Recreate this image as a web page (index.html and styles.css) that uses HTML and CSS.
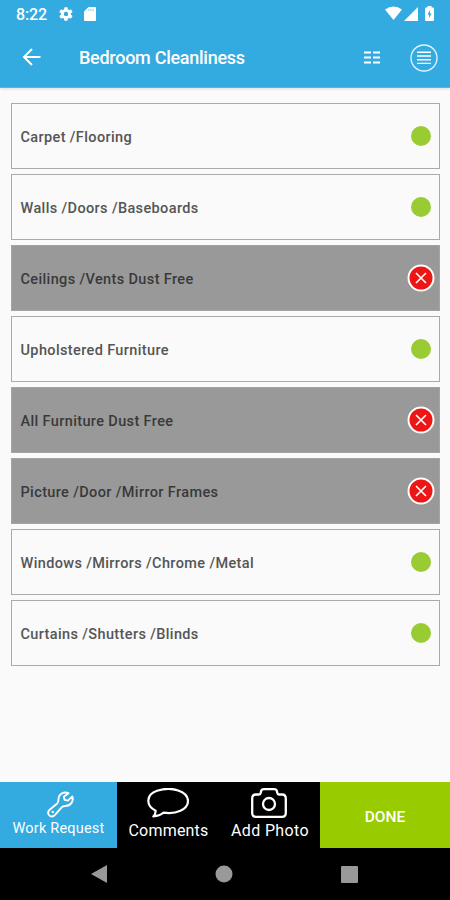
FILE: index.html
```html
<!DOCTYPE html>
<html lang="en">
<head>
<meta charset="utf-8">
<title>Bedroom Cleanliness</title>
<link rel="stylesheet" href="styles.css">
</head>
<body>
<div class="screen">
  <header class="header">
    <div class="status">
      <span class="time">8:22</span>
      <svg class="gear" width="16" height="16" viewBox="0 0 24 24"><path fill="#fff" fill-rule="evenodd" d="M19.4 13a7.500 7.500 0 0 0 0-2l2.100-1.600a.5.5 0 0 0 .1-.7l-2-3.400a.5.5 0 0 0-.6-.2l-2.500 1a7 7 0 0 0-1.700-1l-.4-2.600a.5.5 0 0 0-.5-.5h-4a.5.5 0 0 0-.5.5L9 5.100a7 7 0 0 0-1.700 1l-2.500-1a.5.5 0 0 0-.6.200l-2 3.400a.5.5 0 0 0 .1.700L4.500 11a7.500 7.500 0 0 0 0 2l-2.200 1.600a.5.5 0 0 0-.1.700l2 3.400c.1.200.4.300.6.200l2.500-1a7 7 0 0 0 1.700 1l.4 2.600c0 .3.200.5.500.5h4c.3 0 .5-.2.500-.5l.4-2.600a7 7 0 0 0 1.700-1l2.500 1c.2.100.5 0 .6-.2l2-3.400a.5.5 0 0 0-.1-.7zM12 15.300a3.300 3.300 0 1 1 0-6.600 3.300 3.300 0 0 1 0 6.600z"/></svg>
      <svg class="card" width="12" height="14" viewBox="0 0 12 14"><path fill="#fff" d="M4.500 0H11q1 0 1 1v12q0 1-1 1H1q-1 0-1-1V4.500z"/><path stroke="#33aae0" stroke-opacity=".55" d="M4.800 2v2M7 2v2M9.200 2v2"/></svg>
      <svg class="signals" width="50" height="16" viewBox="0 0 50 16"><g fill="#fff"><path d="M0 3.500Q8.500-2.500 17 3.500L8.500 14z"/><path d="M33 1v14H19z"/><path d="M42.500 0h4v1.500H48q1 0 1 1V14q0 1-1 1h-7q-1 0-1-1V2.500q0-1 1-1h1.500z"/></g><path fill="#33aae0" d="M45 4l-2.500 4.500H44V12l2.600-4.500H45z"/></svg>
    </div>
    <div class="toolbar">
      <svg class="back" width="20" height="18" viewBox="0 0 20 18"><path fill="none" stroke="#fff" stroke-width="2" d="M18.500 9H2M10 1L2 9l8 8"/></svg>
      <h1 class="title">Bedroom Cleanliness</h1>
      <svg class="columns" width="16" height="13" viewBox="0 0 16 13"><path stroke="#fff" stroke-width="1.800" d="M0 1.500h7M9 1.500h7M0 6.500h7M9 6.500h7M0 11.500h7M9 11.500h7"/></svg>
      <svg class="menu" width="28" height="28" viewBox="0 0 28 28"><circle cx="14" cy="14" r="13" fill="none" stroke="#e4f7ff" stroke-width="1.300"/><path stroke="#fff" stroke-width="1.400" d="M7 8.300h14M7 12h14M7 15.700h14M7 19.400h14"/></svg>
    </div>
  </header>

  <main class="list">
    <div class="row"><span>Carpet /Flooring</span><i class="ok"></i></div>
    <div class="row"><span>Walls /Doors /Baseboards</span><i class="ok"></i></div>
    <div class="row failed"><span>Ceilings /Vents Dust Free</span><svg class="cross" viewBox="0 0 28 28"><circle cx="14" cy="14" r="12.500" fill="#ee1515" stroke="#fff" stroke-width="2"/><path stroke="#fff" stroke-width="1.600" d="M9 9l10 10M19 9L9 19"/></svg></div>
    <div class="row"><span>Upholstered Furniture</span><i class="ok"></i></div>
    <div class="row failed"><span>All Furniture Dust Free</span><svg class="cross" viewBox="0 0 28 28"><circle cx="14" cy="14" r="12.500" fill="#ee1515" stroke="#fff" stroke-width="2"/><path stroke="#fff" stroke-width="1.600" d="M9 9l10 10M19 9L9 19"/></svg></div>
    <div class="row failed"><span>Picture /Door /Mirror Frames</span><svg class="cross" viewBox="0 0 28 28"><circle cx="14" cy="14" r="12.500" fill="#ee1515" stroke="#fff" stroke-width="2"/><path stroke="#fff" stroke-width="1.600" d="M9 9l10 10M19 9L9 19"/></svg></div>
    <div class="row"><span>Windows /Mirrors /Chrome /Metal</span><i class="ok"></i></div>
    <div class="row"><span>Curtains /Shutters /Blinds</span><i class="ok"></i></div>
  </main>

  <footer class="actions">
    <div class="action work">
      <svg width="27" height="27" viewBox="0 0 27 27"><path fill="none" stroke="#fff" stroke-width="1.900" stroke-linejoin="round" d="M21.500 2.200C17.500.300 11.500 2.500 11.500 8.500c0 2-.2 2.900-1.300 3.900L2.600 18.800c-4.200 3.700 1.500 9.400 5.200 5.300l6.800-7.800c1-1.100 2-1.300 3.700-1.300 5.700 0 8.600-5.100 7-9.600l-4.400 4.200-3.300-.8-.8-3z"/><circle cx="5.800" cy="20.900" r="1.200" fill="#fff"/></svg>
      <span>Work Request</span>
    </div>
    <div class="action comments">
      <svg width="42" height="30" viewBox="0 0 42 30"><path fill="none" stroke="#fff" stroke-width="2.200" stroke-linejoin="round" d="M8.600 22.700C-2 17.500-.5 6.200 10 2.800 25-2.200 41 3.500 41 13c0 8.600-12 13.600-24.500 11.700-2.700 2.300-6 3.500-10.200 3.700 1.700-1.800 2.500-3.200 2.300-5.700z"/></svg>
      <span>Comments</span>
    </div>
    <div class="action photo">
      <svg width="36" height="30" viewBox="0 0 36 30"><g fill="none" stroke="#fff" stroke-width="2.300"><path stroke-linejoin="round" d="M5 6.500h3c1 0 1.500-.6 1.700-1.500l.3-1.500Q10.500 1.200 13 1.200h10q2.500 0 3 2.300l.3 1.500c.2.900.7 1.500 1.700 1.500h3q3.800 0 3.800 4V25q0 3.800-3.800 3.800H5q-3.800 0-3.800-3.800V10.500q0-4 3.800-4z"/><circle cx="18" cy="16" r="6"/></g></svg>
      <span>Add Photo</span>
    </div>
    <div class="action done"><span>DONE</span></div>
  </footer>

  <nav class="nav">
    <svg width="16" height="18" viewBox="0 0 16 18"><path fill="#999" d="M16 0v18L0 9z"/></svg>
    <svg width="18" height="18" viewBox="0 0 18 18"><circle cx="9" cy="9" r="8.500" fill="#999"/></svg>
    <svg width="17" height="17" viewBox="0 0 17 17"><rect width="17" height="17" rx="1" fill="#999"/></svg>
  </nav>
</div>
</body>
</html>
```
FILE: styles.css
```css
* { box-sizing: border-box; }
body { margin: 0; font-family: Roboto, sans-serif; }
svg { display: block; flex: none; }
.screen { width: 450px; height: 900px; display: flex; flex-direction: column; background: #fafafa; overflow: hidden; }

.header { height: 88px; flex: none; background: #33aae0; color: #fff; border-bottom: 1px solid #7faabd; box-shadow: 0 1px 3px rgba(0, 0, 0, .12); }
.status { height: 28px; display: flex; align-items: center; padding: 0 15px 0 16px; }
.time { width: 42px; font-size: 16px; font-weight: 500; letter-spacing: -.1px; }
.card { margin-left: 10px; }
.signals { margin-left: auto; }
.toolbar { height: 59px; display: flex; align-items: center; padding: 0 12px 0 22px; }
.back { margin-top: -1px; }
.title { margin: 1px 0 0 37px; font-size: 18px; line-height: 24px; font-weight: 500; letter-spacing: -.27px; white-space: nowrap; }
.columns { margin-left: auto; }
.menu { margin-left: 30px; }

.list { flex: 1; display: flex; flex-direction: column; gap: 5px; padding: 15px 10px 0 11px; }
.row { height: 66px; flex: none; display: flex; align-items: center; justify-content: space-between; padding: 0 8px; border: 1.500px solid #aaa; color: #555; font-size: 14.500px; font-weight: 500; letter-spacing: .37px; white-space: nowrap; }
.row span { margin: 2px 0 0 .5px; }
.row.failed { background: #999; border-color: #a4a4a4; color: #393939; padding-right: 4px; }
.ok { width: 20px; height: 20px; border-radius: 50%; background: #99cc33; }
.cross { width: 28px; height: 28px; }

.actions { height: 66px; flex: none; display: grid; grid-template-columns: 117px 103px 100px 130px; background: #000; color: #fff; }
.action { display: flex; flex-direction: column; align-items: center; font-size: 16px; line-height: 20px; letter-spacing: .2px; white-space: nowrap; }
.work { background: #33aae0; padding-top: 9px; font-size: 14.500px; }
.work svg { margin-left: 3px; }
.work span { margin-top: 1px; }
.comments, .photo { padding-top: 6px; }
.comments svg { margin-left: -2px; }
.photo svg { margin-left: -2px; }
.photo span { letter-spacing: .35px; }
.comments span, .photo span { margin-top: 3px; }
.done { background: #99cc00; justify-content: center; font-size: 15.500px; letter-spacing: 0; font-weight: 500; padding-top: 3px; }
.nav { height: 52px; flex: none; background: #000; display: flex; align-items: center; padding: 0 92px 0 91px; justify-content: space-between; }
```
